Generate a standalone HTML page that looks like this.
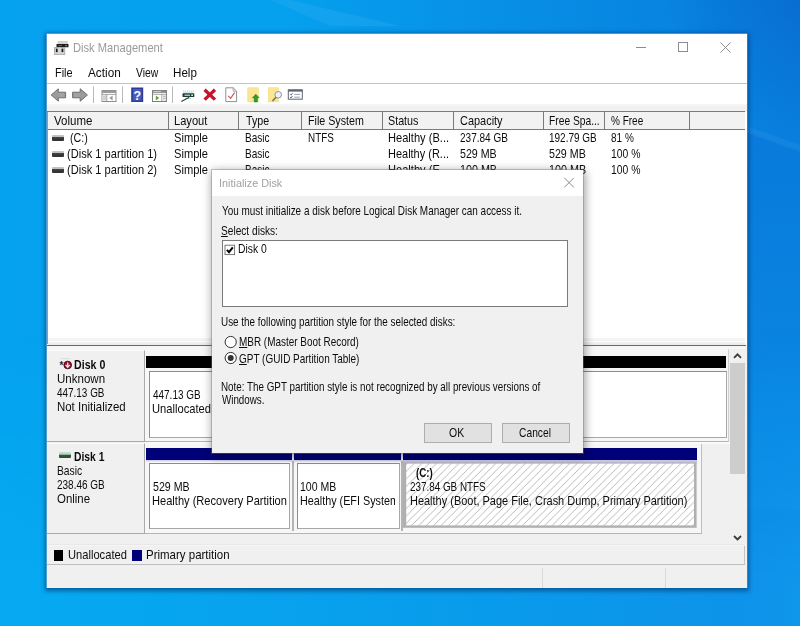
<!DOCTYPE html>
<html><head><meta charset="utf-8"><title>Disk Management</title>
<style>
*{box-sizing:border-box;margin:0;padding:0}
html,body{width:800px;height:626px;overflow:hidden}
body{font-family:"Liberation Sans",sans-serif;font-size:12px;color:#000;position:relative;background:#0f80dc}
#bg{position:absolute;left:0;top:0;width:800px;height:626px}
.a{position:absolute}
.t{position:absolute;white-space:nowrap;line-height:16px;font-size:12px;color:#0c0c0c;transform-origin:0 50%}
.t u{text-decoration:underline;text-underline-offset:1px}
#win{position:absolute;left:47px;top:34px;width:700px;height:554px;background:#fff}
.hc{position:absolute;top:111px;height:19px;background:#f2f2f2;border-top:1px solid #7a7a7a;border-bottom:1px solid #7a7a7a;border-right:1px solid #7a7a7a}
.drv{position:absolute;width:12px;height:6px;background:linear-gradient(#c4c4c4 0,#bcbcbc 38%,#3a3a3a 42%,#333 100%);border-radius:1px}
.lbl{position:absolute;left:47px;width:98px;background:#f0f0f0;border-right:1px solid #a9a9a9;border-bottom:1px solid #a9a9a9;border-top:1px solid #fbfbfb}
.pbox{position:absolute;background:#fff;border:1px solid #8c8c8c;border-right-color:#a8a8a8;border-bottom-color:#a8a8a8}
#dlg{position:absolute;left:212px;top:170px;width:371px;height:283px;background:#f0f0f0;box-shadow:0 0 0 1px rgba(120,120,120,.4),1px 2px 9px 1px rgba(0,0,0,.4)}
.btn{position:absolute;top:423px;height:20px;width:68px;background:#e1e1e1;border:1px solid #adadad}
</style></head><body>
<svg id="bg" viewBox="0 0 800 626">
<defs>
<linearGradient id="g1" x1="0" y1="0" x2="1" y2="0"><stop offset="0" stop-color="#05a2ef"/><stop offset="0.36" stop-color="#05a0ee"/><stop offset="0.55" stop-color="#0794e8"/><stop offset="0.78" stop-color="#0787e1"/><stop offset="1" stop-color="#087edd"/></linearGradient>
<linearGradient id="g3" x1="0" y1="0" x2="1" y2="0"><stop offset="0" stop-color="#06aaf2"/><stop offset="0.5" stop-color="#089eec"/><stop offset="0.93" stop-color="#0d93e9"/><stop offset="1" stop-color="#0f97eb"/></linearGradient>
<linearGradient id="g4" x1="0" y1="0" x2="0" y2="1"><stop offset="0" stop-color="#087adb"/><stop offset="0.5" stop-color="#0982e0"/><stop offset="1" stop-color="#0a8ae4"/></linearGradient>
<linearGradient id="g5" x1="0" y1="0" x2="0" y2="1"><stop offset="0" stop-color="#0e95ea" stop-opacity="0"/><stop offset="1" stop-color="#0e95ea" stop-opacity="1"/></linearGradient>
<linearGradient id="mg" x1="0" y1="0" x2="0" y2="1"><stop offset="0" stop-color="#000"/><stop offset="0.85" stop-color="#fff"/></linearGradient><mask id="mk" maskUnits="userSpaceOnUse" x="0" y="330" width="800" height="296"><rect y="330" width="800" height="296" fill="url(#mg)"/></mask>
<radialGradient id="g6" gradientUnits="userSpaceOnUse" cx="815" cy="-15" r="150"><stop offset="0" stop-color="#0868cf" stop-opacity=".85"/><stop offset="1" stop-color="#0868cf" stop-opacity="0"/></radialGradient>
<filter id="bl" x="-5%" y="-5%" width="110%" height="110%"><feGaussianBlur stdDeviation="2.2"/></filter>
</defs>
<rect width="800" height="626" fill="url(#g1)"/>
<rect x="600" y="0" width="200" height="200" fill="url(#g6)"/>
<path d="M730 125L800 150V510H730Z" fill="url(#g4)"/>
<path d="M730 120L800 145V152L730 127Z" fill="#3a9cec" opacity=".22"/>
<rect y="330" width="800" height="296" fill="url(#g3)" mask="url(#mk)"/>
<path d="M290 0L400 26H330L270 0Z" fill="#3db4f2" opacity=".25"/>
<rect x="45" y="33" width="704" height="558" fill="#012a5e" opacity=".55" filter="url(#bl)"/>
<rect x="46.7" y="33.7" width="700.5" height="554.3" fill="#fff"/>
</svg>

<div id="win"></div>
<!-- menu separator -->
<div class="a" style="left:47px;top:83px;width:700px;height:1px;background:#c4c4c4"></div>
<!-- toolbar bottom strip -->
<div class="a" style="left:47px;top:104px;width:700px;height:8px;background:linear-gradient(#f6f6f6,#f0f0f0 40%)"></div>
<!-- window controls -->
<svg class="a" style="left:630px;top:38px" width="110" height="20" viewBox="630 38 110 20">
<g stroke="#8c8c8c" stroke-width="1" fill="none">
<path d="M636 47.5H646"/><rect x="678.5" y="42.5" width="9" height="9"/><path d="M720.5 42.5L730.5 52.5M730.5 42.5L720.5 52.5"/>
</g></svg>
<!-- app icon -->
<svg class="a" style="left:52px;top:39px" width="20" height="18" viewBox="52 39 20 18">
<rect x="57.6" y="41" width="10.2" height="3.2" fill="#d2d2d2"/>
<rect x="56.5" y="44" width="12" height="3.3" rx=".5" fill="#1e1e1e"/>
<path d="M58.5 45.6H62" stroke="#777" stroke-width=".8"/><rect x="65.3" y="45" width="1.4" height="1.3" fill="#9a9a9a"/>
<rect x="54.4" y="47.6" width="10.4" height="6.8" fill="#d4d4d4" stroke="#a2a2a2" stroke-width=".8"/>
<rect x="55.9" y="48.7" width="1.7" height="3.4" fill="#161616"/>
<rect x="61.6" y="48.7" width="1.7" height="3.4" fill="#161616"/>
<path d="M59.5 47.3V54.3" stroke="#dcdcdc" stroke-width=".8"/>
</svg>
<!--TB0--><svg class="a" style="left:46px;top:84px" width="270" height="22" viewBox="46 84 270 22">
<!-- back / forward -->
<path d="M51.2 95L58.3 88.8V92.2H65.6V97.8H58.3V101.2Z" fill="#9b9b9b" stroke="#6f6f6f" stroke-width="1" stroke-linejoin="round"/><path d="M59.5 94H64M59.5 96H64" stroke="#b4b4b4" stroke-width=".8"/>
<path d="M87.4 95L80.2 88.8V92.2H72.6V97.8H80.2V101.2Z" fill="#9b9b9b" stroke="#6f6f6f" stroke-width="1" stroke-linejoin="round"/><path d="M74 94H80M74 96H80" stroke="#adadad" stroke-width=".8"/>
<g stroke="#b9b9b9" stroke-width="1"><path d="M93.5 86.5V103M122.5 86.5V103M172.5 86.5V103"/></g>
<!-- window w/ left arrow -->
<rect x="102" y="90.5" width="14" height="11" fill="#fff" stroke="#8d8d8d" stroke-width="1"/>
<rect x="102" y="90.5" width="14" height="2.6" fill="#9a9a9a"/>
<path d="M102 94.5H116" stroke="#9a9a9a" stroke-width=".8"/>
<rect x="102.5" y="95" width="4" height="6" fill="#e4e4e4"/><path d="M106.8 94.5V101.5" stroke="#8d8d8d" stroke-width=".8"/>
<path d="M103 97H106M103 99H106" stroke="#aaa" stroke-width=".6"/>
<path d="M109.2 98L112.6 95.6V100.4Z" fill="#8aa58a"/>
<!-- help -->
<rect x="131.2" y="87.5" width="12" height="14.5" fill="#2c3c9c"/>
<rect x="133" y="89" width="8.5" height="11.5" fill="#5168c6" opacity=".75"/>
<text x="137.2" y="100" font-family="Liberation Sans, sans-serif" font-weight="700" font-size="12.5" fill="#fff" text-anchor="middle">?</text>
<!-- window w/ right arrow -->
<rect x="152.5" y="90.5" width="14" height="11" fill="#fff" stroke="#7d7d7d" stroke-width="1"/>
<rect x="152.5" y="90.5" width="14" height="2.4" fill="#8a8a8a"/><path d="M153.5 91.6H161" stroke="#e8e8e8" stroke-width=".8"/>
<path d="M152.5 94.3H166.5" stroke="#8d8d8d" stroke-width=".8"/>
<path d="M161.8 94.3V101.5" stroke="#8d8d8d" stroke-width=".8"/>
<rect x="162.5" y="95" width="3.6" height="6" fill="#e6e6e6"/><path d="M163.2 96.5H165.5M163.2 98.5H165.5" stroke="#999" stroke-width=".6"/>
<path d="M159.2 98L155.8 95.6V100.4Z" fill="#6d9a45"/>
<!-- disk -->
<path d="M183 91H194M183.5 92.3H193.5" stroke="#9fd0c8" stroke-width=".9" stroke-dasharray="1.2 .8"/>
<rect x="182.5" y="93.3" width="11.8" height="3.8" rx=".6" fill="#1f3a3a"/>
<path d="M184.5 95.2H190" stroke="#d6ece8" stroke-width="1.1"/><rect x="191.3" y="94.4" width="1.6" height="1.6" fill="#dfe"/>
<path d="M185 98.3H191" stroke="#a9dcae" stroke-width="1.3"/>
<path d="M189 97.6L181.3 101.6" stroke="#3a3a3a" stroke-width="1.1"/>
<!-- red X -->
<path d="M204.6 89.8L215 99.6M215 89.8L204.6 99.6" stroke="#c8142a" stroke-width="3.3" stroke-linecap="butt"/>
<!-- check doc -->
<path d="M225.8 87.8H233.2L236.6 91.2V101.6H225.8Z" fill="#fff" stroke="#8f8f8f" stroke-width="1"/>
<path d="M233.2 87.8V91.2H236.6" fill="none" stroke="#8f8f8f" stroke-width=".8"/>
<path d="M228.2 95.8L230.6 98.4L234.6 92.6" fill="none" stroke="#c45a5a" stroke-width="1.2"/>
<!-- yellow doc + green arrow -->
<rect x="247.8" y="87.8" width="10.4" height="14" fill="#fbe792" stroke="#f0d974" stroke-width=".6"/>
<path d="M255.8 94.2L259.2 97.8H257.4V102H254.2V97.8H252.4Z" fill="#2f9a2f" stroke="#1f7a1f" stroke-width=".5"/>
<!-- yellow doc + magnifier -->
<rect x="268.5" y="87.8" width="9.8" height="14" fill="#fbe792" stroke="#f0d974" stroke-width=".6"/>
<circle cx="278.2" cy="94.8" r="3.3" fill="#eaf1fb" stroke="#8a93a8" stroke-width="1"/>
<path d="M276 97.4L272.4 101" stroke="#7d7350" stroke-width="1.5"/>
<!-- list -->
<rect x="288.3" y="89.8" width="14" height="9.4" fill="#fff" stroke="#5b6472" stroke-width="1"/>
<rect x="288.3" y="89.8" width="14" height="1.8" fill="#5b6472"/>
<path d="M290 94.2L291 95.2L292.4 93.2M290 97L291 98L292.4 96" fill="none" stroke="#445" stroke-width=".8"/>
<path d="M294.2 94.4H300M294.2 97.2H300" stroke="#8e97a5" stroke-width=".9"/>
</svg>
<!--TB1-->
<!-- list header -->
<div class="a" style="left:47px;top:111px;width:698px;height:19px;background:#f2f2f2;border-top:1px solid #7a7a7a;border-bottom:1px solid #7a7a7a"></div>
<div class="hc" style="left:47px;width:122px"></div>
<div class="hc" style="left:169px;width:70px"></div>
<div class="hc" style="left:239px;width:63px"></div>
<div class="hc" style="left:302px;width:81px"></div>
<div class="hc" style="left:383px;width:71px"></div>
<div class="hc" style="left:454px;width:90px"></div>
<div class="hc" style="left:544px;width:61px"></div>
<div class="hc" style="left:605px;width:85px"></div>
<!-- list left border -->
<div class="a" style="left:47px;top:112px;width:1px;height:232px;background:#9a9a9a"></div>
<div class="drv" style="left:52px;top:135px"></div>
<div class="drv" style="left:52px;top:151px"></div>
<div class="drv" style="left:52px;top:167px"></div>
<!-- top pane bottom edge / splitter -->
<div class="a" style="left:48px;top:338px;width:697px;height:7px;background:linear-gradient(#f6f6f6,#f1f1f1 40%,#fdfdfd 50%,#f1f1f1 60%,#e9e9e9)"></div>
<div class="a" style="left:47px;top:345px;width:700px;height:243px;background:#f0f0f0"></div>
<div class="a" style="left:47px;top:344.5px;width:699px;height:1.2px;background:#6a6a6a"></div>
<div class="a" style="left:47px;top:346px;width:698px;height:5px;background:#f6f6f6"></div>
<!-- disk 0 row -->
<div class="lbl" style="top:350px;height:92px"></div>
<div class="a" style="left:145px;top:349px;width:584px;height:93px;border-right:1px solid #cfcfcf;border-bottom:1px solid #b4b4b4;background:#f7f7f7"></div>
<div class="a" style="left:146px;top:356px;width:580px;height:12.3px;background:#000"></div>
<div class="pbox" style="left:149px;top:371px;width:578px;height:67px"></div>
<!-- disk 1 row -->
<div class="lbl" style="top:443px;height:91px"></div>
<div class="a" style="left:145px;top:442px;width:585px;height:2px;background:#fafafa"></div>
<div class="a" style="left:145px;top:444px;width:557px;height:90px;border-right:1px solid #bdbdbd;border-bottom:1px solid #b4b4b4;background:#f7f7f7"></div>
<div class="a" style="left:146px;top:448px;width:146px;height:12.3px;background:#000078"></div>
<div class="a" style="left:294px;top:448px;width:107px;height:12.3px;background:#000078"></div>
<div class="a" style="left:403px;top:448px;width:294px;height:12.3px;background:#000078"></div>
<div class="a" style="left:146px;top:460px;width:551px;height:2px;background:linear-gradient(#c9c9ea,#efeffa)"></div>
<div class="a" style="left:292px;top:448px;width:2px;height:13px;background:#e6e6f4"></div>
<div class="a" style="left:401px;top:448px;width:2px;height:13px;background:#e6e6f4"></div>
<div class="a" style="left:292px;top:461px;width:1.5px;height:70px;background:#b4b4b4"></div>
<div class="a" style="left:401px;top:461px;width:1.5px;height:70px;background:#b4b4b4"></div>
<div class="pbox" style="left:149px;top:463px;width:141px;height:66px"></div>
<div class="pbox" style="left:297px;top:463px;width:103px;height:66px"></div>
<svg class="a" style="left:403px;top:460px" width="294" height="69" viewBox="0 0 294 69">
<defs><pattern id="h" width="7.4" height="7.4" patternUnits="userSpaceOnUse"><rect width="7.4" height="7.4" fill="#fff"/><path d="M-1 8.4L8.4 -1M-1 1L1 -1M6.4 8.4L8.4 6.4" stroke="#adadad" stroke-width=".85"/></pattern></defs>
<rect x="0" y="0.5" width="294" height="3" fill="#c0c0e0"/>
<rect x="0" y="2.5" width="293.6" height="65.3" fill="#b0b0b0"/>
<rect x="3.2" y="3.6" width="287.8" height="61.8" fill="url(#h)"/>
</svg>
<!-- scrollbar -->
<div class="a" style="left:730px;top:349px;width:15px;height:196px;background:#f0f0f0"></div>
<div class="a" style="left:730px;top:363px;width:15px;height:111px;background:#cdcdcd"></div>
<svg class="a" style="left:730px;top:349px" width="15" height="196" viewBox="0 0 15 196">
<path d="M4 8.8L7.5 5.3L11 8.8M4 187L7.5 190.5L11 187" fill="none" stroke="#3c3c3c" stroke-width="1.8"/></svg>
<!-- legend -->
<div class="a" style="left:47px;top:544px;width:698px;height:2px;background:linear-gradient(#e2e2e2,#fcfcfc)"></div>
<div class="a" style="left:744px;top:546px;width:1px;height:19px;background:#c4c4c4"></div>
<div class="a" style="left:53.5px;top:549.5px;width:9.5px;height:11px;background:#000"></div>
<div class="a" style="left:132px;top:549.5px;width:9.5px;height:11px;background:#000078"></div>
<!-- status bar -->
<div class="a" style="left:47px;top:564px;width:698px;height:1px;background:#bebebe"></div>
<div class="a" style="left:47px;top:566px;width:700px;height:22px;background:#f0f0f0"></div>
<div class="a" style="left:542px;top:568px;width:1px;height:20px;background:#d9d9d9"></div>
<div class="a" style="left:665px;top:568px;width:1px;height:20px;background:#d9d9d9"></div>
<!-- disk icons in lower pane -->
<svg class="a" style="left:58px;top:356px" width="16" height="15" viewBox="58 356 16 15">
<path d="M60 358.7H70" stroke="#dcdcdc" stroke-width="1"/>
<text x="59.4" y="368.6" font-family="Liberation Sans, sans-serif" font-weight="700" font-size="10" fill="#2a2a2a">*</text>
<circle cx="67.7" cy="365" r="3.8" fill="#9a1230" stroke="#56081c" stroke-width="1"/><path d="M67.7 362.4V366.4M65.6 364.8L67.7 367.3L69.8 364.8" stroke="#fbe3ea" stroke-width="1.3" fill="none"/></svg>
<div class="drv" style="left:59px;top:452px;width:12px;height:6px;background:linear-gradient(#bfe3c8 0,#b2d8bc 40%,#3b5548 46%,#33473d 100%)"></div>
<span class="t" style="left:73.06px;top:40.20px;font-size:11.9px;color:#9a9a9a;transform:scaleX(0.9381);">Disk Management</span>
<span class="t" style="left:55.35px;top:64.70px;font-size:12.2px;transform:scaleX(0.8966);">File</span>
<span class="t" style="left:88.00px;top:64.70px;font-size:12.2px;transform:scaleX(0.9660);">Action</span>
<span class="t" style="left:135.64px;top:64.70px;font-size:12.2px;transform:scaleX(0.8517);">View</span>
<span class="t" style="left:172.80px;top:64.70px;font-size:12.2px;transform:scaleX(0.9524);">Help</span>
<span class="t" style="left:54.13px;top:113.40px;font-size:12.2px;transform:scaleX(0.9437);">Volume</span>
<span class="t" style="left:173.59px;top:113.40px;font-size:12.2px;transform:scaleX(0.9123);">Layout</span>
<span class="t" style="left:245.58px;top:113.40px;font-size:12.2px;transform:scaleX(0.8741);">Type</span>
<span class="t" style="left:307.87px;top:113.40px;font-size:12.2px;transform:scaleX(0.8768);">File System</span>
<span class="t" style="left:387.95px;top:113.40px;font-size:12.2px;transform:scaleX(0.8806);">Status</span>
<span class="t" style="left:459.74px;top:113.40px;font-size:12.2px;transform:scaleX(0.8984);">Capacity</span>
<span class="t" style="left:548.91px;top:113.40px;font-size:12.2px;transform:scaleX(0.8412);">Free Spa...</span>
<span class="t" style="left:611.39px;top:113.40px;font-size:12.2px;transform:scaleX(0.8208);">% Free</span>
<span class="t" style="left:69.84px;top:130.40px;font-size:12.2px;transform:scaleX(0.8742);">(C:)</span>
<span class="t" style="left:66.82px;top:146.30px;font-size:12.2px;transform:scaleX(0.9103);">(Disk 1 partition 1)</span>
<span class="t" style="left:66.82px;top:162.20px;font-size:12.2px;transform:scaleX(0.9103);">(Disk 1 partition 2)</span>
<span class="t" style="left:173.93px;top:130.40px;font-size:12.2px;transform:scaleX(0.9135);">Simple</span>
<span class="t" style="left:244.98px;top:130.40px;font-size:12.2px;transform:scaleX(0.8228);">Basic</span>
<span class="t" style="left:173.93px;top:146.30px;font-size:12.2px;transform:scaleX(0.9135);">Simple</span>
<span class="t" style="left:244.98px;top:146.30px;font-size:12.2px;transform:scaleX(0.8228);">Basic</span>
<span class="t" style="left:173.93px;top:162.20px;font-size:12.2px;transform:scaleX(0.9135);">Simple</span>
<span class="t" style="left:244.98px;top:162.20px;font-size:12.2px;transform:scaleX(0.8228);">Basic</span>
<span class="t" style="left:307.94px;top:130.40px;font-size:12.2px;transform:scaleX(0.8099);">NTFS</span>
<span class="t" style="left:387.59px;top:130.40px;font-size:12.2px;transform:scaleX(0.9108);">Healthy (B...</span>
<span class="t" style="left:387.60px;top:146.30px;font-size:12.2px;transform:scaleX(0.9004);">Healthy (R...</span>
<span class="t" style="left:387.59px;top:162.20px;font-size:12.2px;transform:scaleX(0.9108);">Healthy (E...</span>
<span class="t" style="left:459.79px;top:130.40px;font-size:12.2px;transform:scaleX(0.8210);">237.84 GB</span>
<span class="t" style="left:459.86px;top:146.30px;font-size:12.2px;transform:scaleX(0.8734);">529 MB</span>
<span class="t" style="left:459.53px;top:162.20px;font-size:12.2px;transform:scaleX(0.8815);">100 MB</span>
<span class="t" style="left:549.03px;top:130.40px;font-size:12.2px;transform:scaleX(0.8185);">192.79 GB</span>
<span class="t" style="left:549.31px;top:146.30px;font-size:12.2px;transform:scaleX(0.8746);">529 MB</span>
<span class="t" style="left:548.98px;top:162.20px;font-size:12.2px;transform:scaleX(0.8827);">100 MB</span>
<span class="t" style="left:611.29px;top:130.40px;font-size:12.2px;transform:scaleX(0.8205);">81 %</span>
<span class="t" style="left:610.96px;top:146.30px;font-size:12.2px;transform:scaleX(0.8511);">100 %</span>
<span class="t" style="left:610.96px;top:162.20px;font-size:12.2px;transform:scaleX(0.8511);">100 %</span>
<span class="t" style="left:73.85px;top:356.60px;font-size:12.2px;font-weight:700;transform:scaleX(0.8719);">Disk 0</span>
<span class="t" style="left:56.67px;top:370.70px;font-size:12.2px;transform:scaleX(0.9462);">Unknown</span>
<span class="t" style="left:57.05px;top:384.70px;font-size:12.2px;transform:scaleX(0.8148);">447.13 GB</span>
<span class="t" style="left:56.56px;top:398.70px;font-size:12.2px;transform:scaleX(0.9387);">Not Initialized</span>
<span class="t" style="left:152.80px;top:386.90px;font-size:12.2px;transform:scaleX(0.8174);">447.13 GB</span>
<span class="t" style="left:152.40px;top:400.60px;font-size:12.2px;transform:scaleX(0.9163);">Unallocated</span>
<span class="t" style="left:73.86px;top:448.60px;font-size:12.2px;font-weight:700;transform:scaleX(0.8487);">Disk 1</span>
<span class="t" style="left:56.65px;top:462.70px;font-size:12.2px;transform:scaleX(0.8456);">Basic</span>
<span class="t" style="left:56.74px;top:476.60px;font-size:12.2px;transform:scaleX(0.8201);">238.46 GB</span>
<span class="t" style="left:56.91px;top:490.60px;font-size:12.2px;transform:scaleX(0.9377);">Online</span>
<span class="t" style="left:152.56px;top:478.90px;font-size:12.2px;transform:scaleX(0.8709);">529 MB</span>
<span class="t" style="left:152.09px;top:492.50px;font-size:12.2px;transform:scaleX(0.9097);">Healthy (Recovery Partition</span>
<span class="t" style="left:300.49px;top:478.90px;font-size:12.2px;transform:scaleX(0.8642);">100 MB</span>
<span class="t" style="left:300.37px;top:492.50px;font-size:12.2px;transform:scaleX(0.8850);">Healthy (EFI System</span>
<span class="t" style="left:415.50px;top:464.70px;font-size:12.2px;font-weight:700;transform:scaleX(0.8000);">(C:)</span>
<span class="t" style="left:409.89px;top:478.90px;font-size:12.2px;transform:scaleX(0.8097);">237.84 GB NTFS</span>
<span class="t" style="left:409.70px;top:492.60px;font-size:12.2px;transform:scaleX(0.8998);">Healthy (Boot, Page File, Crash Dump, Primary Partition)</span>
<span class="t" style="left:68.00px;top:547.40px;font-size:12.2px;transform:scaleX(0.9147);">Unallocated</span>
<span class="t" style="left:145.66px;top:547.40px;font-size:12.2px;transform:scaleX(0.9425);">Primary partition</span>
<div class="a" style="left:395px;top:492px;width:4px;height:17px;background:#fff"></div>

<!-- dialog -->
<div id="dlg"></div>
<div class="a" style="left:212px;top:170px;width:371px;height:26px;background:#fff"></div>
<svg class="a" style="left:560px;top:174px" width="18" height="18" viewBox="560 174 18 18"><path d="M564.3 177.8L573.9 187.4M573.9 177.8L564.3 187.4" stroke="#8a8a8a" stroke-width="1" fill="none"/></svg>
<div class="a" style="left:222px;top:240px;width:346px;height:67px;background:#fff;border:1px solid #7a7a7a"></div>
<svg class="a" style="left:224px;top:244px" width="12" height="12" viewBox="0 0 12 12"><rect x="1" y="1.2" width="9.6" height="9.4" fill="#fff" stroke="#6a6a6a" stroke-width=".9"/><path d="M2.9 5.8L5 8.2L8.8 3.4" fill="none" stroke="#000" stroke-width="2"/></svg>
<svg class="a" style="left:223px;top:334px" width="16" height="32" viewBox="0 0 16 32">
<circle cx="7.7" cy="8" r="5.6" fill="#fff" stroke="#333" stroke-width="1"/>
<circle cx="7.7" cy="24" r="5.6" fill="#fff" stroke="#333" stroke-width="1"/><circle cx="7.7" cy="24" r="3" fill="#333"/></svg>
<div class="btn" style="left:424px"></div>
<div class="btn" style="left:502px"></div>
<span class="t" style="left:218.66px;top:174.50px;font-size:11.7px;color:#a2a2a2;transform:scaleX(0.9281);">Initialize Disk</span>
<span class="t" style="left:221.80px;top:203.00px;font-size:12.2px;transform:scaleX(0.8151);">You must initialize a disk before Logical Disk Manager can access it.</span>
<span class="t" style="left:221.48px;top:222.50px;font-size:12.2px;transform:scaleX(0.8315);"><u>S</u>elect disks:</span>
<span class="t" style="left:237.90px;top:241.00px;font-size:12.2px;transform:scaleX(0.8494);">Disk 0</span>
<span class="t" style="left:221.29px;top:314.25px;font-size:12.2px;transform:scaleX(0.8101);">Use the following partition style for the selected disks:</span>
<span class="t" style="left:238.68px;top:334.25px;font-size:12.2px;transform:scaleX(0.8151);"><u>M</u>BR (Master Boot Record)</span>
<span class="t" style="left:238.99px;top:350.50px;font-size:12.2px;transform:scaleX(0.8181);"><u>G</u>PT (GUID Partition Table)</span>
<span class="t" style="left:221.19px;top:379.25px;font-size:12.2px;transform:scaleX(0.8067);">Note: The GPT partition style is not recognized by all previous versions of</span>
<span class="t" style="left:222.00px;top:391.60px;font-size:12.2px;transform:scaleX(0.8039);">Windows.</span>
<span class="t" style="left:449.46px;top:425.00px;font-size:12.2px;transform:scaleX(0.8593);">OK</span>
<span class="t" style="left:519.47px;top:425.00px;font-size:12.2px;transform:scaleX(0.8425);">Cancel</span>
</body></html>
